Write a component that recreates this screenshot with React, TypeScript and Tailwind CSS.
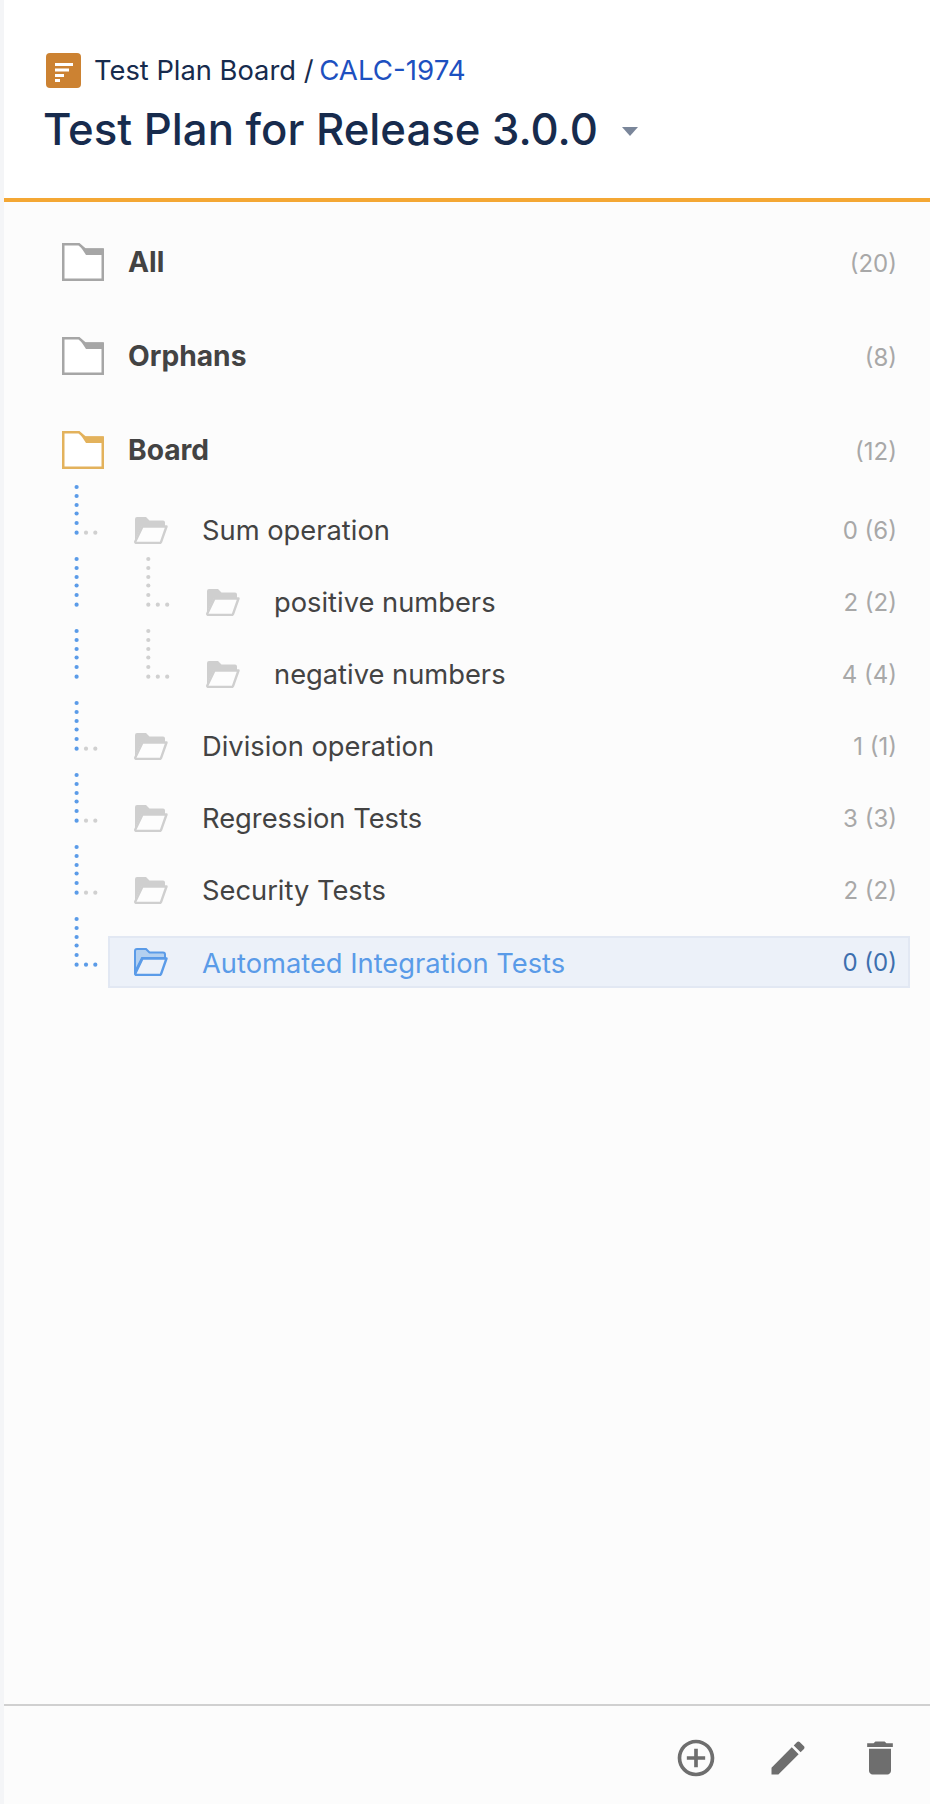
import { CSSProperties } from 'react'

const dotYs = [0, 9, 18, 26.5, 36, 45.7]

interface Row {
  name: string
  count: string
  nested?: boolean
  active?: boolean
}

const rows: Row[] = [
  { name: 'Sum operation', count: '0 (6)' },
  { name: 'positive numbers', count: '2 (2)', nested: true },
  { name: 'negative numbers', count: '4 (4)', nested: true },
  { name: 'Division operation', count: '1 (1)' },
  { name: 'Regression Tests', count: '3 (3)' },
  { name: 'Security Tests', count: '2 (2)' },
  { name: 'Automated Integration Tests', count: '0 (0)', active: true },
]

const tops = [
  { name: 'All', count: '(20)', color: '#a6a6a6' },
  { name: 'Orphans', count: '(8)', color: '#a6a6a6' },
  { name: 'Board', count: '(12)', color: '#e3b25c' },
]

const fontStyle: CSSProperties = { fontFamily: 'Inter, sans-serif' }

function BigFolder({ color }: { color: string }) {
  return (
    <svg width="42" height="38" viewBox="0 0 42 38" className="shrink-0">
      <path d="M1.25 1.25H17L23 6.5H40.75V36.75H1.25Z" fill="#fff" stroke={color} strokeWidth="2.5" />
      <path d="M17 1.25L24 12H41V5.5H23Z" fill={color} />
    </svg>
  )
}

function SmallFolder({ active }: { active?: boolean }) {
  const line = active ? '#5a9be8' : '#cfcfcf'
  const fill = active ? '#b3d0f0' : '#cfcfcf'
  return (
    <svg width="34" height="28" viewBox="0 0 34 28" className="shrink-0">
      <path
        d="M1 3Q1 1 3 1H12L15.5 4.5H29Q31 4.5 31 6.5V10H8L3 20L1 26Z"
        fill={fill}
        stroke={active ? line : 'none'}
        strokeWidth="2"
      />
      <path d="M8.5 10.5H32.5L27 26.2Q26.7 27 25.5 27H2.5Q1 27 1.3 25.5Z" fill="#fdfdfd" fillOpacity={active ? 0 : 1} stroke={line} strokeWidth="2.4" strokeLinejoin="round" />
    </svg>
  )
}

function BlueConnector({ nested, active }: { nested?: boolean; active?: boolean }) {
  const side = active ? '#5a9be8' : '#d0d0d0'
  return (
    <svg width="104" height="72" className="shrink-0 overflow-visible">
      {dotYs.map(y => (
        <circle key={y} cx="72.6" cy={y} r="2.1" fill="#5a9be8" />
      ))}
      {!nested && <circle cx="82" cy="45.7" r="2.1" fill={side} />}
      {!nested && <circle cx="91.3" cy="45.7" r="2.1" fill={side} />}
    </svg>
  )
}

function GrayConnector() {
  return (
    <svg width="72" height="72" className="shrink-0 overflow-visible">
      {dotYs.map(y => (
        <circle key={y} cx="40.3" cy={y} r="2.1" fill="#d0d0d0" />
      ))}
      <circle cx="49.8" cy="45.7" r="2.1" fill="#d0d0d0" />
      <circle cx="59.2" cy="45.7" r="2.1" fill="#d0d0d0" />
    </svg>
  )
}

export default function App() {
  return (
    <div className="min-h-[1804px] flex flex-col border-l-4 border-[#f4f5f7] bg-[#fcfcfc]" style={fontStyle}>
      {/* Header */}
      <div className="h-[202px] bg-white border-b-4 border-[#f4a734] pt-[52px] pl-[42px]">
        <div className="flex items-center h-[36px]">
          <svg width="35" height="35" viewBox="0 0 35 35" className="shrink-0 mr-[13px]">
            <rect width="35" height="35" rx="4" fill="#cc8232" />
            <rect x="9" y="10" width="18" height="3" fill="#fff" />
            <rect x="9" y="15.5" width="14" height="3" fill="#fff" />
            <rect x="9" y="21" width="9" height="3" fill="#fff" />
            <rect x="9" y="26" width="5" height="3" fill="#fff" />
          </svg>
          <span className="text-[27.3px] text-[#172b4d] translate-y-px">Test Plan Board /&nbsp;</span>
          <span className="text-[27.7px] text-[#1d50c0] translate-y-px -ml-[2px]">CALC-1974</span>
        </div>
        <div className="flex items-center mt-[17px] h-[50px] -ml-[3px]">
          <h1 className="text-[43.7px] font-[550] text-[#172b4d] leading-none">Test Plan for Release 3.0.0</h1>
          <svg width="16" height="9" viewBox="0 0 16 9" className="ml-[24px] mt-[2px]">
            <path d="M0 0H16L8 9Z" fill="#7a869a" />
          </svg>
        </div>
      </div>

      {/* Tree */}
      <div className="pt-[13px]">
        {tops.map((t, i) => (
          <div key={t.name} className={`flex pl-[58px] pr-[33px] pt-[28px] ${i === 2 ? 'h-[84px]' : 'h-[94px]'}`}>
            <BigFolder color={t.color} />
            <span className="ml-[24px] text-[28.2px] font-bold text-[#434343] leading-[38px]">{t.name}</span>
            <span className="ml-auto text-[24px] text-[#a8a8a8] leading-[38px] translate-y-[2px]">{t.count}</span>
          </div>
        ))}
        {rows.map(r => (
          <div key={r.name} className="flex h-[72px]">
            <BlueConnector nested={r.nested} active={r.active} />
            {r.nested && <GrayConnector />}
            <div
              className={`mt-[17px] mr-[20px] h-[52px] flex-1 flex items-center pl-[24px] pr-[11px] border-2 ${r.active ? 'bg-[#ecf1f9] border-[#e2e8f3]' : 'border-transparent'}`}
            >
              <SmallFolder active={r.active} />
              <span className={`ml-[34px] text-[27.3px] ${r.active ? 'text-[#5a9be8] translate-y-[2px]' : 'text-[#434343] translate-y-px'}`}>{r.name}</span>
              <span className={`ml-auto text-[24px] translate-y-px ${r.active ? 'text-[#3d6fae]' : 'text-[#a8a8a8]'}`}>{r.count}</span>
            </div>
          </div>
        ))}
      </div>

      {/* Footer */}
      <div className="mt-auto h-[100px] border-t-2 border-[#d0d0d0] flex items-start justify-end gap-[48px] pr-[28px] pt-[30px]">
        <svg width="44" height="44" viewBox="0 0 24 24" fill="#6e6e6e">
          <path d="M13 7h-2v4H7v2h4v4h2v-4h4v-2h-4V7zm-1-5C6.48 2 2 6.48 2 12s4.48 10 10 10 10-4.48 10-10S17.52 2 12 2zm0 18c-4.41 0-8-3.59-8-8s3.59-8 8-8 8 3.59 8 8-3.59 8-8 8z" />
        </svg>
        <svg width="44" height="44" viewBox="0 0 24 24" fill="#6e6e6e">
          <path d="M3 17.25V21h3.75L17.81 9.94l-3.75-3.75L3 17.25zM20.71 7.04c.39-.39.39-1.02 0-1.41l-2.34-2.34c-.39-.39-1.02-.39-1.41 0l-1.83 1.83 3.75 3.75 1.83-1.83z" />
        </svg>
        <svg width="44" height="44" viewBox="0 0 24 24" fill="#6e6e6e">
          <path d="M6 19c0 1.1.9 2 2 2h8c1.1 0 2-.9 2-2V7H6v12zM19 4h-3.5l-1-1h-5l-1 1H5v2h14V4z" />
        </svg>
      </div>
    </div>
  )
}
